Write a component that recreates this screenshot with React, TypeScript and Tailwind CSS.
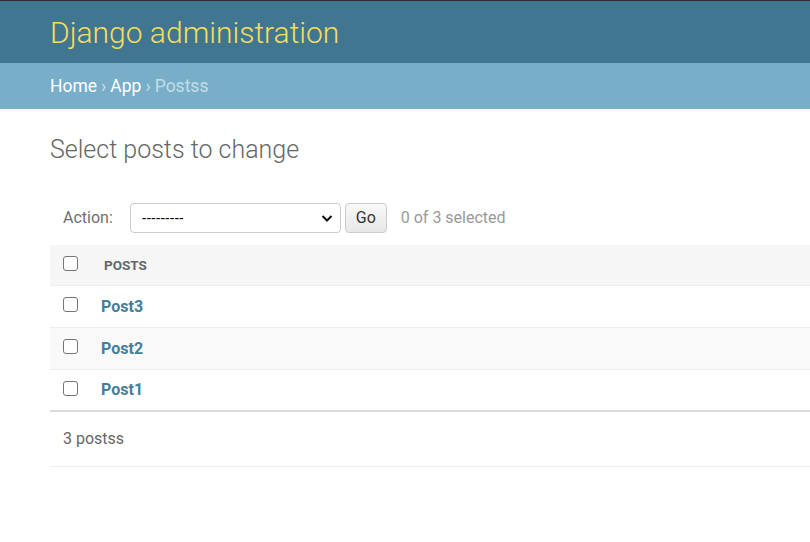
export default function App() {
  const rows = ["Post3", "Post2", "Post1"];
  return (
    <div className="min-h-[542px] bg-white font-['Roboto',_'Liberation_Sans',_sans-serif] overflow-hidden">
      <div className="h-px bg-[#2b2b2b]" />
      {/* Header */}
      <div className="h-[62px] bg-[#417690] flex items-center pl-[50px]">
        <h1 className="text-[30px] font-light text-[#f5dd5d] leading-none mt-[1px]">Django administration</h1>
      </div>
      {/* Breadcrumbs */}
      <div className="h-[46px] bg-[#79aec8] flex items-center pl-[50px] text-[17.5px] text-[#c4dce8]">
        <span className="text-white">Home</span>
        <span className="mx-[4px]">›</span>
        <span className="text-white">App</span>
        <span className="mx-[4px]">›</span>
        <span>Postss</span>
      </div>
      {/* Content */}
      <div className="pl-[50px]">
        <h1 className="text-[25px] font-light text-[#666] mt-[26px] leading-[30px]">Select posts to change</h1>
        <div className="mt-[38px] flex items-center h-[30px] text-[16px] text-[#666]">
          <label className="ml-[13px] mr-[17px] text-[#707070]">Action:</label>
          <div className="relative w-[211px] h-[30px] border border-[#ccc] rounded-[4px] bg-white flex items-center pl-[11px]">
            <span className="text-[14px] text-black font-['Liberation_Sans',_sans-serif]">---------</span>
            <svg className="absolute right-[7px] top-[10px]" width="12" height="9" viewBox="0 0 12 9">
              <path d="M1.5 2 L6 6.5 L10.5 2" fill="none" stroke="#111" strokeWidth="2" />
            </svg>
          </div>
          <button className="ml-[4px] h-[30px] w-[42px] border border-[#ccc] rounded-[4px] bg-gradient-to-b from-[#f8f8f8] to-[#e8e8e8] text-[16px] text-[#333]">Go</button>
          <span className="ml-[14px] text-[#999]">0 of 3 selected</span>
        </div>
        <div className="mt-[12px] w-[900px]">
          <div className="h-[41px] bg-[#f6f6f6] border-b border-[#eee] flex items-center">
            <div className="ml-[13px] mb-[4px] w-[15px] h-[15px] border border-[#767676] rounded-[3px] bg-white" />
            <span className="ml-[26px] text-[13.5px] font-bold text-[#666] uppercase">Posts</span>
          </div>
          {rows.map((r, i) => (
            <div
              key={r}
              className={`h-[42px] flex items-center ${i === 1 ? "bg-[#f9f9f9]" : "bg-white"} ${i === 2 ? "border-b-2 border-[#ddd]" : "border-b border-[#eee]"}`}
            >
              <div className="ml-[13px] mb-[4px] w-[15px] h-[15px] border border-[#767676] rounded-[3px] bg-white" />
              <span className="ml-[23px] text-[16px] font-bold text-[#447e9b]">{r}</span>
            </div>
          ))}
          <div className="h-[55px] flex items-center border-b border-[#eee] pl-[13px] text-[16px] text-[#666]">
            3 postss
          </div>
        </div>
      </div>
    </div>
  );
}
